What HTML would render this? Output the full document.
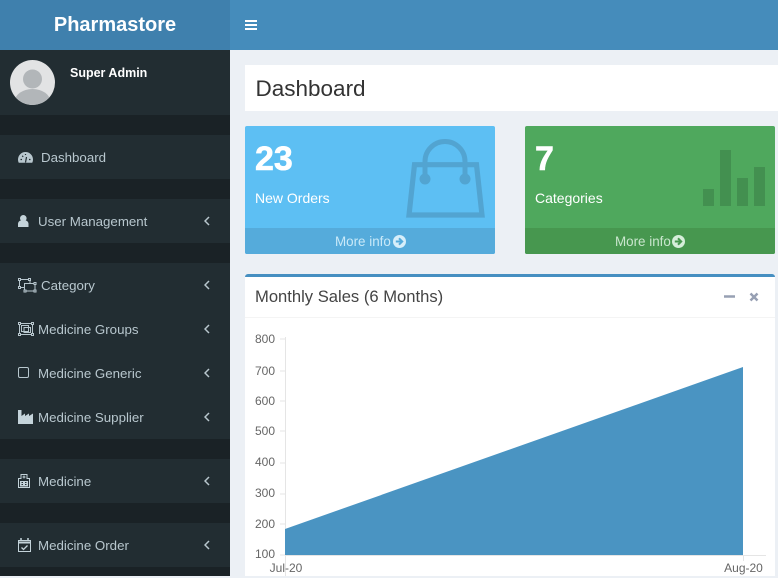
<!DOCTYPE html>
<html lang="en">
<head>
<meta charset="utf-8">
<title>Pharmastore</title>
<style>
html,body{margin:0;padding:0;width:778px;height:576px;overflow:hidden;background:#ecf0f5;font-family:"Liberation Sans",sans-serif}
div,span,svg{position:absolute;box-sizing:border-box}
.t{white-space:nowrap;line-height:20px}
.row{left:0;width:230px;height:44px;background:#222d32}
.lbl{left:38px;color:#b8c7ce;font-size:13.3px}
.chev{left:204px}
.ic{left:18px}
.y{left:245px;width:30px;text-align:right;color:#666;font-size:12px;line-height:14px}
.num{color:#fff;font-size:34px;font-weight:bold;line-height:34px;-webkit-text-stroke:.6px #fff}
</style>
</head>
<body>
<div style="left:0;top:0;width:230px;height:576px;background:#1a2226"></div>
<div style="left:230px;top:0;width:548px;height:50px;background:#458cbb"></div>
<div style="left:0;top:0;width:230px;height:50px;background:#3f80ad"></div>
<div class="t" style="left:0;top:15px;width:230px;text-align:center;color:#fff;font-size:20px;font-weight:bold">Pharmastore</div>
<div style="left:245px;top:20px;width:12px;height:2px;background:#fff"></div>
<div style="left:245px;top:24px;width:12px;height:2px;background:#fff"></div>
<div style="left:245px;top:28px;width:12px;height:2px;background:#fff"></div>

<div style="left:0;top:50px;width:230px;height:65px;background:#222d32"></div>
<svg style="left:10px;top:60px" width="45" height="45" viewBox="0 0 45 45"><defs><clipPath id="a"><circle cx="22.500" cy="22.500" r="22.500"/></clipPath></defs><circle cx="22.500" cy="22.500" r="22.500" fill="#e2e3e4"/><g clip-path="url(#a)"><circle cx="22.500" cy="19" r="9.500" fill="#b2b6b9"/><ellipse cx="22.500" cy="42" rx="18" ry="13" fill="#b2b6b9"/></g></svg>
<div class="t" style="left:70px;top:63px;color:#fff;font-size:12.500px;font-weight:bold">Super Admin</div>

<div class="row" style="top:135px"></div>
<svg class="ic" style="top:152px" width="15" height="11" viewBox="0 0 15 11"><path d="M7.500 0A7.500 7.500 0 0 0 0 7.500c0 1.200.3 2.400.8 3.300h13.400c.5-.9.800-2.100.8-3.300A7.500 7.500 0 0 0 7.500 0z" fill="#b8c7ce"/><path d="M7.500 10.500L8.500 5M2.500 7.500h1.500M11 7.500h1.500M4.200 3.800l1 1M7.500 2v1" stroke="#222d32" stroke-width="1.200" fill="none"/></svg>
<div class="t lbl" style="top:148px;left:41px">Dashboard</div>

<div class="row" style="top:199px"></div>
<svg class="ic" style="top:215px" width="11" height="12" viewBox="0 0 11 12"><circle cx="5.300" cy="3.300" r="3.300" fill="#c4d3da"/><path d="M0 12V9C0 7 1.500 5.500 3 5.500h4.600C9 5.500 10.500 7 10.500 9v3z" fill="#c4d3da"/></svg>
<div class="t lbl" style="top:212px">User Management</div>
<svg class="chev" style="top:216px" width="6" height="10" viewBox="0 0 6 10"><path d="M5 1L1 5l4 4" fill="none" stroke="#b8c7ce" stroke-width="1.500"/></svg>

<div style="left:0;top:263px;width:230px;height:176px;background:#222d32"></div>
<svg class="ic" style="top:278px" width="19" height="15" viewBox="0 0 19 15" fill="none" stroke="#b8c7ce" stroke-width="1"><path d="M1.500 1.500h10.500v4M1.500 1.500v8h5M6.500 5.500h10.500v7.500H6.500z"/><rect x=".5" y=".5" width="2" height="2" fill="#222d32"/><rect x="10.500" y=".5" width="2" height="2" fill="#222d32"/><rect x=".5" y="8.500" width="2" height="2" fill="#222d32"/><rect x="16" y="4.500" width="2" height="2" fill="#222d32"/><rect x="16" y="12" width="2" height="2" fill="#222d32"/><rect x="6" y="12" width="2" height="2" fill="#222d32"/></svg>
<div class="t lbl" style="top:276px;left:41px">Category</div>
<svg class="chev" style="top:280px" width="6" height="10" viewBox="0 0 6 10"><path d="M5 1L1 5l4 4" fill="none" stroke="#b8c7ce" stroke-width="1.500"/></svg>

<svg class="ic" style="top:322px" width="16" height="14" viewBox="0 0 16 14" fill="none" stroke="#b8c7ce" stroke-width="1"><rect x="1.500" y="1.500" width="13" height="11"/><rect x="3.500" y="3.500" width="7" height="6"/><rect x="6" y="5.500" width="6.500" height="5"/><rect x=".5" y=".5" width="2" height="2" fill="#222d32"/><rect x="13.500" y=".5" width="2" height="2" fill="#222d32"/><rect x=".5" y="11.500" width="2" height="2" fill="#222d32"/><rect x="13.500" y="11.500" width="2" height="2" fill="#222d32"/></svg>
<div class="t lbl" style="top:320px">Medicine Groups</div>
<svg class="chev" style="top:324px" width="6" height="10" viewBox="0 0 6 10"><path d="M5 1L1 5l4 4" fill="none" stroke="#b8c7ce" stroke-width="1.500"/></svg>

<svg class="ic" style="top:367px" width="11" height="11" viewBox="0 0 11 11"><rect x=".5" y=".5" width="10" height="10" rx="1.500" fill="none" stroke="#b8c7ce" stroke-width="1"/></svg>
<div class="t lbl" style="top:364px">Medicine Generic</div>
<svg class="chev" style="top:368px" width="6" height="10" viewBox="0 0 6 10"><path d="M5 1L1 5l4 4" fill="none" stroke="#b8c7ce" stroke-width="1.500"/></svg>

<svg class="ic" style="top:410px" width="15" height="14" viewBox="0 0 15 14"><path d="M0 0h3.500v6L7 3.500V6l4-2.500V6l4-2.500V14H0z" fill="#c4d3da"/></svg>
<div class="t lbl" style="top:408px">Medicine Supplier</div>
<svg class="chev" style="top:412px" width="6" height="10" viewBox="0 0 6 10"><path d="M5 1L1 5l4 4" fill="none" stroke="#b8c7ce" stroke-width="1.500"/></svg>

<div class="row" style="top:459px"></div>
<svg class="ic" style="top:474px" width="12" height="14" viewBox="0 0 12 14"><path d="M.5 4.500h2.500V.5h6v4h2.500v9H.5z" fill="none" stroke="#c4d3da"/><path d="M2 7h8v5.500H2z" fill="#c4d3da"/><path d="M3.500 8.500h1.500M7 8.500h1.500M3.500 10.500h1.500M7 10.500h1.500" stroke="#222d32"/><path d="M6 1.500v3M4.500 3h3" stroke="#c4d3da"/></svg>
<div class="t lbl" style="top:472px">Medicine</div>
<svg class="chev" style="top:476px" width="6" height="10" viewBox="0 0 6 10"><path d="M5 1L1 5l4 4" fill="none" stroke="#b8c7ce" stroke-width="1.500"/></svg>

<div class="row" style="top:523px"></div>
<svg class="ic" style="top:538px" width="13" height="14" viewBox="0 0 13 14" fill="none" stroke="#c4d3da"><rect x=".5" y="2.500" width="12" height="11"/><path d="M.5 4.500h12" stroke-width="2"/><path d="M3 0v3M10 0v3" stroke-width="1.500"/><path d="M3.500 9.500l2 2 4-4" stroke-width="1.300"/></svg>
<div class="t lbl" style="top:536px">Medicine Order</div>
<svg class="chev" style="top:540px" width="6" height="10" viewBox="0 0 6 10"><path d="M5 1L1 5l4 4" fill="none" stroke="#b8c7ce" stroke-width="1.500"/></svg>

<div style="left:245px;top:65px;width:533px;height:46px;background:#fff"></div>
<div class="t" style="left:255.500px;top:77px;color:#333;font-size:22.500px;line-height:24px">Dashboard</div>

<div style="left:245px;top:126px;width:250px;height:128px;background:#5dbff3;border-radius:2px;overflow:hidden">
  <div style="left:0;top:102px;width:250px;height:26px;background:#55abdb"></div>
</div>
<div class="t num" style="left:255px;top:142px">23</div>
<div class="t" style="left:255px;top:188px;color:#fff;font-size:14px">New Orders</div>
<svg style="left:405px;top:138px" width="82" height="82" viewBox="0 0 82 82" fill="none" stroke="#52a4d1"><path d="M9.500 26.700h62L77 77H4z" stroke-width="5.200"/><path d="M20 41V23.500a20 20 0 0 1 40 0V41" stroke-width="5"/><circle cx="20" cy="41" r="5.500" fill="#52a4d1" stroke="none"/><circle cx="60" cy="41" r="5.500" fill="#52a4d1" stroke="none"/></svg>
<div class="t" style="left:335px;top:232px;color:#c9e9f8;font-size:13.400px">More info</div>
<svg style="left:393px;top:235px" width="13" height="13" viewBox="0 0 13 13"><circle cx="6.500" cy="6.500" r="6.500" fill="#d6eefa"/><path d="M2.800 6.500h6M6 3.300l3.200 3.200L6 9.700" fill="none" stroke="#55abdb" stroke-width="2"/></svg>

<div style="left:525px;top:126px;width:250px;height:128px;background:#4fa85d;border-radius:2px;overflow:hidden">
  <div style="left:0;top:102px;width:250px;height:26px;background:#47974f"></div>
</div>
<div class="t num" style="left:535px;top:142px">7</div>
<div class="t" style="left:535px;top:188px;color:#fff;font-size:14px">Categories</div>
<svg style="left:703px;top:150px" width="62" height="56" viewBox="0 0 62 56" fill="#439050"><rect x="0" y="39" width="11" height="17"/><rect x="17" y="0" width="11" height="56"/><rect x="34" y="28" width="11" height="28"/><rect x="51" y="17" width="11" height="39"/></svg>
<div class="t" style="left:615px;top:232px;color:#c9e6cd;font-size:13.400px">More info</div>
<svg style="left:672px;top:235px" width="13" height="13" viewBox="0 0 13 13"><circle cx="6.500" cy="6.500" r="6.500" fill="#d6eeda"/><path d="M2.800 6.500h6M6 3.300l3.200 3.200L6 9.700" fill="none" stroke="#47974f" stroke-width="2"/></svg>

<div style="left:245px;top:274px;width:530px;height:302px;background:#fff;border-top:3px solid #468fc1;border-radius:3px 3px 0 0"></div>
<div style="left:245px;top:317px;width:530px;height:1px;background:#f4f4f4"></div>
<div class="t" style="left:255px;top:287px;color:#444;font-size:16.600px">Monthly Sales (6 Months)</div>
<svg style="left:724px;top:292px" width="11" height="9" viewBox="0 0 11 9"><path d="M0 4.500h11" stroke="#97a0b3" stroke-width="2.500"/></svg>
<svg style="left:749px;top:292px" width="10" height="10" viewBox="0 0 10 10"><path d="M1.500 1.500l7 7M8.500 1.500l-7 7" stroke="#97a0b3" stroke-width="2.500"/></svg>

<svg style="left:245px;top:320px" width="530" height="256" viewBox="0 0 530 256">
  <path d="M35 19h5M35 51h5M35 81h5M35 111h5M35 143h5M35 174h5M35 204h5M35 235h5M40.500 17v244M40 235.500h481M498.500 235v6" fill="none" stroke="#e5e5e5"/>
  <path d="M40 209L498 47V235H40z" fill="#4a94c2"/>
</svg>
<div class="y" style="top:332px">800</div>
<div class="y" style="top:364px">700</div>
<div class="y" style="top:394px">600</div>
<div class="y" style="top:424px">500</div>
<div class="y" style="top:455px">400</div>
<div class="y" style="top:486px">300</div>
<div class="y" style="top:517px">200</div>
<div class="y" style="top:547px">100</div>
<div class="t" style="left:256px;width:60px;text-align:center;top:558px;color:#666;font-size:12px">Jul-20</div>
<div class="t" style="left:713.500px;width:60px;text-align:center;top:558px;color:#666;font-size:12px">Aug-20</div>
</body>
</html>
